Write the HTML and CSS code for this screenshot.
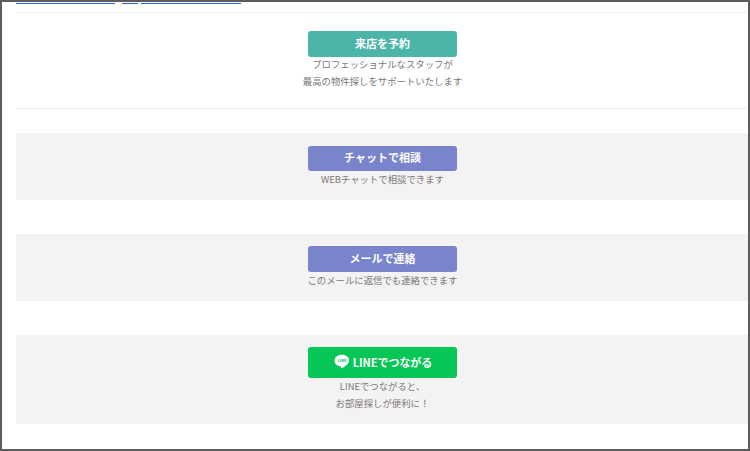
FILE: index.html
```html
<!DOCTYPE html>
<html lang="ja">
<head>
<meta charset="utf-8">
<title>お問い合わせ</title>
<link rel="stylesheet" href="styles.css">
</head>
<body>
<div class="frame">
  <div class="content">
    <div class="linkbar"><span class="u u1"></span><span class="u u2"></span><span class="u u3"></span></div>
    <section class="block block-top">
      <a class="btn teal">来店を予約</a>
      <p class="note first">プロフェッショナルなスタッフが</p>
      <p class="note">最高の物件探しをサポートいたします</p>
    </section>
    <section class="block grey chat">
      <a class="btn purple">チャットで相談</a>
      <p class="note single">WEBチャットで相談できます</p>
    </section>
    <section class="block grey mail">
      <a class="btn purple">メールで連絡</a>
      <p class="note single">このメールに返信でも連絡できます</p>
    </section>
    <section class="block grey line">
      <a class="btn green">
        <svg class="line-icon" width="16" height="16" viewBox="0 0 16 16" aria-hidden="true">
          <path fill="#fff" d="M8 .8C3.800.8.500 3.400.500 6.700c0 2.900 2.600 5.300 6.100 5.800.7.200.6.700.5 1.400 0 .4.200.7.700.4 1-.6 4-2.400 5.600-4.100 1-1.100 1.500-2.300 1.500-3.500C15.500 3.400 12.200.8 8 .8z"/>
          <text class="line-icon-text" x="8" y="8.300" text-anchor="middle">LINE</text>
        </svg><span>LINEでつながる</span></a>
      <p class="note first">LINEでつながると、</p>
      <p class="note">お部屋探しが便利に！</p>
    </section>
  </div>
</div>
</body>
</html>
```
FILE: styles.css
```css
* { box-sizing: border-box; }
html, body { margin: 0; padding: 0; background: #fff; }
body { font-family: "Noto Sans CJK JP", "Noto Sans", sans-serif; }
.frame {
  width: 750px;
  height: 451px;
  border: 2px solid #5c5c5c;
  overflow: hidden;
  background: #fff;
}
.content { padding-left: 14px; }
.linkbar {
  display: flex;
  height: 10px;
  align-items: flex-start;
}
.u { display: block; height: 1px; margin-top: 1px; background: #2f66c8; box-shadow: 0 0 1px #a9c3ee; }
.u1 { width: 99px; }
.u2 { width: 16px; margin-left: 7px; }
.u3 { width: 100px; margin-left: 3px; }
.block {
  display: flex;
  flex-direction: column;
  align-items: center;
  padding-left: 1px;
}
.block-top {
  height: 97px;
  padding-top: 18px;
  border-top: 1px solid #f1f1f1;
  border-bottom: 1px solid #eeeeee;
}
.grey { background: #f3f3f3; }
.chat { height: 67px; margin-top: 24px; padding-top: 13px; }
.mail { height: 67px; margin-top: 34px; padding-top: 12px; }
.line { height: 89px; margin-top: 34px; padding-top: 12px; }
.btn {
  display: flex;
  align-items: center;
  justify-content: center;
  width: 149px;
  height: 26px;
  padding-bottom: 2px;
  border-radius: 3px;
  color: #fff;
  font-size: 11px;
  font-weight: 700;
  line-height: 1;
}
.teal { background: #4bb5a8; }
.purple { background: #7a84cc; }
.chat .btn { height: 25px; }
.green { background: #06c755; height: 31px; padding-bottom: 1px; padding-left: 1px; letter-spacing: -0.05px; }
.line-icon { margin-right: 3px; flex: none; }
.line-icon-text { fill: #06c755; font-size: 4px; font-weight: 700; letter-spacing: 0; }
.note {
  margin: 0;
  color: #7d7877;
  font-size: 9.4px;
  line-height: 14px;
}
.note.first { margin-top: 0; }
.note + .note { margin-top: 4px; }
.block-top .note + .note { margin-top: 3px; }
.note.single { margin-top: 1px; }
.line .note.first { margin-top: 1px; }
.line .note + .note { margin-top: 3px; }
```
